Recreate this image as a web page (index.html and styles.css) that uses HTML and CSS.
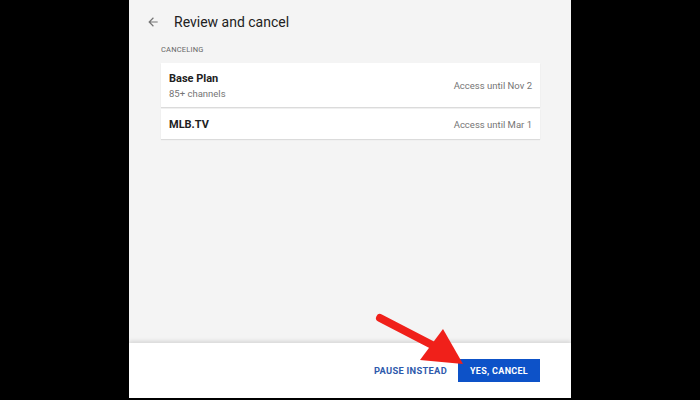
FILE: index.html
```html
<!DOCTYPE html>
<html>
<head>
<meta charset="utf-8">
<link rel="stylesheet" href="styles.css">
</head>
<body>
<div class="panel">
  <div class="main">
    <div class="header">
      <svg class="back" width="14" height="14" viewBox="0 0 24 24"><path d="M20 11H7.83l5.59-5.59L12 4l-8 8 8 8 1.41-1.41L7.83 13H20v-2z" fill="#757575"/></svg>
      <div class="title">Review and cancel</div>
    </div>
    <div class="section">CANCELING</div>
    <div class="card tall">
      <div class="left">
        <div class="name">Base Plan</div>
        <div class="sub">85+ channels</div>
      </div>
      <div class="access">Access until Nov 2</div>
    </div>
    <div class="card">
      <div class="left">
        <div class="name">MLB.TV</div>
      </div>
      <div class="access">Access until Mar 1</div>
    </div>
  </div>
  <div class="footer">
    <div class="pause">PAUSE INSTEAD</div>
    <div class="yes">YES, CANCEL</div>
  </div>
</div>
<svg class="arrow" width="700" height="400" viewBox="0 0 700 400">
  <line x1="380" y1="318" x2="436" y2="347" stroke="#f0201a" stroke-width="8" stroke-linecap="round"/>
  <polygon points="443,329 420,360 463,364" fill="#f0201a"/>
</svg>
</body>
</html>
```
FILE: styles.css
```css
html, body {
  margin: 0;
  padding: 0;
}
body {
  background: #000;
  width: 700px;
  height: 400px;
  position: relative;
  overflow: hidden;
  font-family: Roboto, "Liberation Sans", sans-serif;
}
.panel {
  margin-left: 129px;
  width: 442px;
  height: 398px;
  background: #f4f4f4;
  display: flex;
  flex-direction: column;
}
.main {
  flex: 1;
  padding: 0 31px 0 32px;
}
.header {
  display: flex;
  align-items: center;
  height: 44px;
  margin-left: -15px;
}
.back {
  margin-right: 14px;
}
.title {
  font-size: 14px;
  color: #212121;
}
.section {
  font-size: 7.5px;
  color: #666;
  letter-spacing: 0.2px;
  height: 19px;
  line-height: 12px;
}
.card {
  background: #fff;
  display: flex;
  align-items: center;
  justify-content: space-between;
  padding: 0 8px;
  height: 30px;
  margin-bottom: 2px;
  box-shadow: 0 1px 1px rgba(0,0,0,0.1);
}
.card.tall {
  height: 44px;
}
.name {
  font-size: 11px;
  font-weight: 700;
  color: #212121;
}
.sub {
  font-size: 9.5px;
  color: #757575;
  margin-top: 3px;
}
.access {
  font-size: 9.5px;
  color: #757575;
}
.footer {
  height: 55px;
  background: #fff;
  box-shadow: 0 -2px 4px rgba(0,0,0,0.12);
  display: flex;
  align-items: center;
  justify-content: flex-end;
  padding-right: 31px;
  gap: 11px;
}
.pause {
  font-size: 9.3px;
  font-weight: 700;
  color: #2e5aac;
  letter-spacing: 0.3px;
}
.yes {
  background: #0d52c8;
  color: #fff;
  font-size: 9px;
  font-weight: 700;
  letter-spacing: 0.3px;
  width: 82px;
  height: 23px;
  display: flex;
  align-items: center;
  justify-content: center;
}
.arrow {
  position: absolute;
  left: 0;
  top: 0;
  pointer-events: none;
}
```
